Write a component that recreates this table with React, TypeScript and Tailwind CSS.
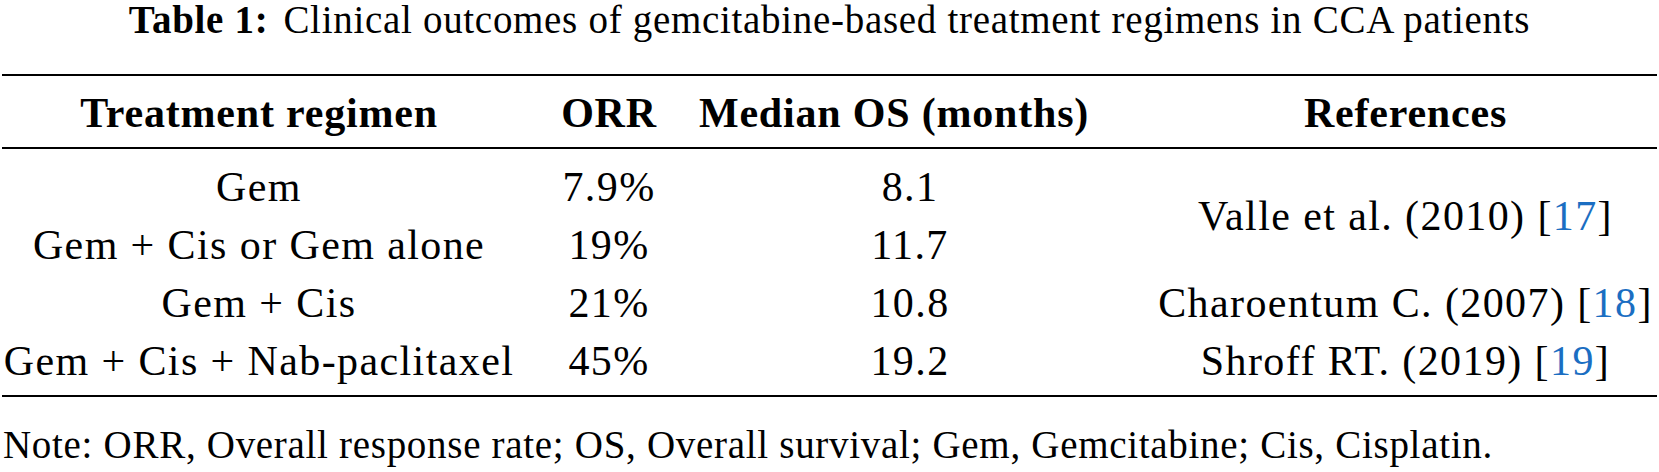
const rows = [
  { regimen: 'Gem', orr: '7.9%', os: '8.1' },
  { regimen: 'Gem + Cis or Gem alone', orr: '19%', os: '11.7' },
  { regimen: 'Gem + Cis', orr: '21%', os: '10.8' },
  { regimen: 'Gem + Cis + Nab-paclitaxel', orr: '45%', os: '19.2' },
];

const serif = "font-['Liberation_Serif','Times_New_Roman',serif]";

const Ref = ({ text, num }: { text: string; num: string }) => (
  <span className="whitespace-nowrap">
    {text} [<span className="text-[#1b6ec2]">{num}</span>]
  </span>
);

export default function App() {
  return (
    <div className={`w-[1659px] h-[472px] bg-white text-black ${serif} font-normal`}>
      <div className="flex justify-center pt-[2px] text-[39px] leading-[36px] tracking-[0.7px] whitespace-nowrap">
        <span className="font-bold">Table 1:</span>
        <span className="pl-[15px]">Clinical outcomes of gemcitabine-based treatment regimens in CCA patients</span>
      </div>

      <div className="mx-[2px] mt-[36px] border-t-2 border-b-2 border-black">
        <div className="grid grid-cols-[514px_186px_384px_1fr] border-b-2 border-black pt-[4px] text-[42px] leading-[67px] font-bold tracking-[0.8px] whitespace-nowrap">
          <div className="flex justify-center">Treatment regimen</div>
          <div className="flex justify-center">ORR</div>
          <div className="flex justify-center">Median OS (months)</div>
          <div className="flex justify-center pl-[68px]">References</div>
        </div>

        <div className="grid grid-cols-[514px_186px_384px_1fr] grid-rows-[58px_58px_58px_58px] pt-[9px] pb-[5px] text-[42px] leading-[58px] tracking-[1.4px] whitespace-nowrap">
          {rows.map((r, i) => (
            <div key={r.regimen} className="contents">
              <div className="flex justify-center" style={{ gridRow: i + 1 }}>{r.regimen}</div>
              <div className="flex justify-center" style={{ gridRow: i + 1 }}>{r.orr}</div>
              <div className="flex justify-center pl-[32px]" style={{ gridRow: i + 1 }}>{r.os}</div>
            </div>
          ))}
          <div className="col-start-4 row-start-1 row-span-2 flex items-center justify-center pl-[68px]">
            <Ref text="Valle et al. (2010)" num="17" />
          </div>
          <div className="col-start-4 row-start-3 flex justify-center pl-[68px]">
            <Ref text="Charoentum C. (2007)" num="18" />
          </div>
          <div className="col-start-4 row-start-4 flex justify-center pl-[68px]">
            <Ref text="Shroff RT. (2019)" num="19" />
          </div>
        </div>
      </div>

      <div className="mt-[29px] pl-[3px] text-[39px] leading-[38px] tracking-[0.7px] whitespace-nowrap">
        Note: ORR, Overall response rate; OS, Overall survival; Gem, Gemcitabine; Cis, Cisplatin.
      </div>
    </div>
  );
}
